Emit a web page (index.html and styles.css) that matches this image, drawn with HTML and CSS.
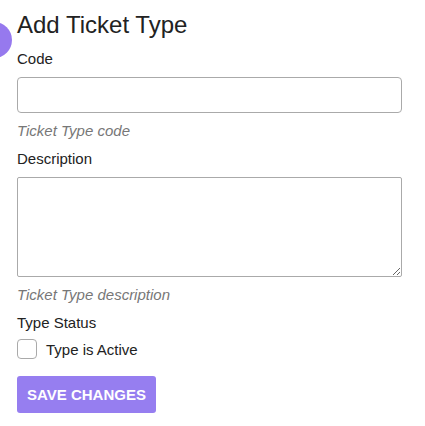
FILE: index.html
```html
<!DOCTYPE html>
<html>
<head>
<meta charset="utf-8">
<link rel="stylesheet" href="styles.css">
</head>
<body>
<div class="avatar"></div>
<main class="page">
  <h1 class="title">Add Ticket Type</h1>
  <form class="form">
    <div class="field">
      <label class="label" for="code">Code</label>
      <input class="input" id="code" type="text">
      <div class="help">Ticket Type code</div>
    </div>
    <div class="field">
      <label class="label" for="desc">Description</label>
      <textarea class="textarea" id="desc"></textarea>
      <div class="help">Ticket Type description</div>
    </div>
    <div class="field">
      <div class="label label-tight">Type Status</div>
      <label class="check"><span class="box"></span><span>Type is Active</span></label>
    </div>
    <button class="btn" type="button">SAVE CHANGES</button>
  </form>
</main>
</body>
</html>
```
FILE: styles.css
```css
html, body { margin: 0; padding: 0; background: #fff; }
body { font-family: "Liberation Sans", Arial, sans-serif; color: #222; position: relative; overflow: hidden; }
.avatar { position: absolute; left: -24px; top: 22px; width: 36px; height: 36px; border-radius: 50%; background: #9679ee; }
.page { padding: 10px 23px 0 17px; }
.title { margin: 0; font-size: 24px; font-weight: 400; line-height: 30px; color: #222; }
.form { display: flex; flex-direction: column; }
.field { display: flex; flex-direction: column; }
.label { font-size: 15px; line-height: 20px; margin-top: 9px; margin-bottom: 0; color: #222; }
.label-tight { margin-top: 9px; }
.input { box-sizing: border-box; height: 36px; margin-top: 8px; border: 1px solid #aaa; border-radius: 4px; width: 100%; outline: none; caret-color: transparent; }
.textarea { box-sizing: border-box; height: 100px; margin-top: 8px; border: 1px solid #aaa; border-radius: 2px; width: 100%; resize: vertical; caret-color: transparent; }
.help { font-size: 15px; font-style: italic; color: #777; line-height: 18px; margin-top: 9px; }
.check { display: flex; align-items: center; gap: 9px; font-size: 15px; margin-top: 6px; color: #222; }
.box { flex: none; width: 20px; height: 20px; box-sizing: border-box; border: 1px solid #aaa; border-radius: 4px; background: #fff; }
.btn { align-self: flex-start; margin-top: 17px; width: 139px; height: 37px; border: none; border-radius: 3px; background: #967ef0; color: #fff; font-family: "Liberation Sans", Arial, sans-serif; font-weight: 700; font-size: 15px; padding: 0; }
```
